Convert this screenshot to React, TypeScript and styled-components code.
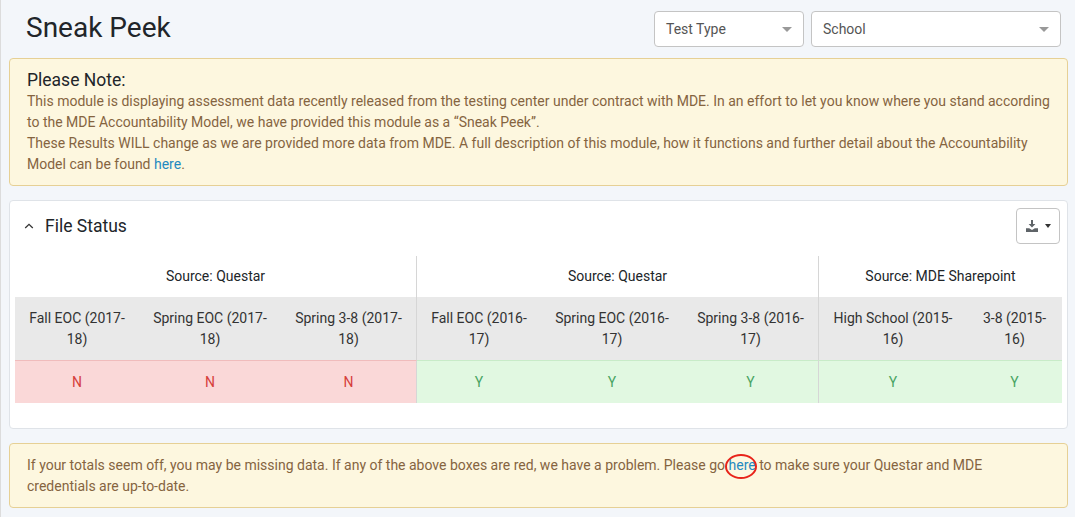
import React from "react";
import styled, { createGlobalStyle } from "styled-components";

const GlobalStyle = createGlobalStyle`
  html, body {
    margin: 0;
    padding: 0;
    background: #f3f6fa;
    font-family: Roboto, "Liberation Sans", sans-serif;
    font-size: 14px;
    line-height: 21px;
    color: #212529;
  }
`;

type Col = { label: string; year: string; value: "Y" | "N"; width: number };
type Group = { source: string; cols: Col[] };

const groups: Group[] = [
  {
    source: "Source: Questar",
    cols: [
      { label: "Fall EOC", year: "2017-18", value: "N", width: 124 },
      { label: "Spring EOC", year: "2017-18", value: "N", width: 142 },
      { label: "Spring 3-8", year: "2017-18", value: "N", width: 136 },
    ],
  },
  {
    source: "Source: Questar",
    cols: [
      { label: "Fall EOC", year: "2016-17", value: "Y", width: 124 },
      { label: "Spring EOC", year: "2016-17", value: "Y", width: 142 },
      { label: "Spring 3-8", year: "2016-17", value: "Y", width: 136 },
    ],
  },
  {
    source: "Source: MDE Sharepoint",
    cols: [
      { label: "High School", year: "2015-16", value: "Y", width: 148 },
      { label: "3-8", year: "2015-16", value: "Y", width: 95 },
    ],
  },
];

const App: React.FC = () => {
  return (
    <Page>
      <GlobalStyle />
      {/* Header */}
      <Header>
        <Title>Sneak Peek</Title>
        <Filters>
          <Select $width={150}>
            Test Type
            <Caret />
          </Select>
          <Select $width={250}>
            School
            <Caret />
          </Select>
        </Filters>
      </Header>

      {/* Top note */}
      <Note>
        <NoteTitle>Please Note:</NoteTitle>
        This module is displaying assessment data recently released from the testing center under contract with MDE. In an effort to let you know where you stand according to the MDE Accountability Model, we have provided this module as a “Sneak Peek”.
        <br />
        These Results WILL change as we are provided more data from MDE. A full description of this module, how it functions and further detail about the Accountability Model can be found <NoteLink>here</NoteLink>.
      </Note>

      {/* File status */}
      <Panel>
        <PanelHeader>
          <PanelName>
            <svg width="10" height="6" viewBox="0 0 10 6" fill="none" stroke="#333" strokeWidth="1.3">
              <path d="M1.2 5 5 1.4 8.8 5" />
            </svg>
            <PanelTitle>File Status</PanelTitle>
          </PanelName>
          <ExportButton>
            <svg width="12" height="12" viewBox="0 0 12 12" fill="#5f6468">
              <path d="M5 0h2v4h2.4L6 7.6 2.6 4H5z" />
              <path d="M0 8.2h3.2L6 10l2.8-1.8H12V12H0z" />
            </svg>
            <SmallCaret />
          </ExportButton>
        </PanelHeader>
        <StatusTable>
          <colgroup>
            {groups.flatMap((g) => g.cols).map((c, i) => (
              <col key={i} width={c.width} />
            ))}
          </colgroup>
          <thead>
            <tr>
              {groups.map((g, i) => (
                <SourceCell key={i} colSpan={g.cols.length} $divider={i < groups.length - 1}>
                  {g.source}
                </SourceCell>
              ))}
            </tr>
            <tr>
              {groups.map((g, i) =>
                g.cols.map((c, j) => (
                  <ColumnCell key={`${i}-${j}`} $divider={i < groups.length - 1 && j === g.cols.length - 1}>
                    {c.label} ({c.year})
                  </ColumnCell>
                ))
              )}
            </tr>
          </thead>
          <tbody>
            <tr>
              {groups.map((g, i) =>
                g.cols.map((c, j) => (
                  <ValueCell
                    key={`${i}-${j}`}
                    $ok={c.value === "Y"}
                    $divider={i < groups.length - 1 && j === g.cols.length - 1}
                  >
                    {c.value}
                  </ValueCell>
                ))
              )}
            </tr>
          </tbody>
        </StatusTable>
      </Panel>

      {/* Bottom note */}
      <BottomNote>
        If your totals seem off, you may be missing data. If any of the above boxes are red, we have a problem. Please go{" "}
        <CircledLink>here</CircledLink> to make sure your Questar and MDE credentials are up-to-date.
      </BottomNote>
    </Page>
  );
};

export default App;

const Page = styled.div`
  box-sizing: border-box;
  width: 1075px;
  height: 517px;
  overflow: hidden;
  padding: 0 7px 0 8px;
  border-left: 1px solid #dcdcdc;
`;

const Header = styled.header`
  display: flex;
  justify-content: space-between;
  align-items: flex-start;
  height: 58px;
  padding: 11px 7px 0 17px;
  box-sizing: border-box;
`;

const Title = styled.h1`
  margin: 0;
  font-size: 28px;
  line-height: 34px;
  font-weight: 400;
  color: #212529;
`;

const Filters = styled.div`
  display: flex;
  gap: 7px;
`;

const Select = styled.div<{ $width: number }>`
  box-sizing: border-box;
  width: ${({ $width }) => $width}px;
  height: 36px;
  display: flex;
  align-items: center;
  justify-content: space-between;
  padding: 0 11px;
  background: #fff;
  border: 1px solid #c4c4c4;
  border-radius: 4px;
  color: #555;
`;

const Caret = styled.span`
  width: 0;
  height: 0;
  border-left: 5px solid transparent;
  border-right: 5px solid transparent;
  border-top: 5px solid #999;
`;

const SmallCaret = styled.span`
  width: 0;
  height: 0;
  border-left: 3.5px solid transparent;
  border-right: 3.5px solid transparent;
  border-top: 4px solid #333;
`;

const Note = styled.div`
  box-sizing: border-box;
  height: 128px;
  padding: 10px 17px;
  background: #fdf7df;
  border: 1px solid #e6d095;
  border-radius: 4px;
  color: #85643f;
`;

const NoteTitle = styled.div`
  font-size: 17.5px;
  line-height: 22px;
  color: #212529;
`;

const NoteLink = styled.a`
  color: #1f8ac0;
`;

const Panel = styled.section`
  box-sizing: border-box;
  height: 229px;
  margin-top: 14px;
  padding: 0 5px;
  background: #fff;
  border: 1px solid #dfe3e8;
  border-radius: 4px;
`;

const PanelHeader = styled.div`
  display: flex;
  justify-content: space-between;
  align-items: flex-start;
  height: 55px;
  padding-top: 7px;
  box-sizing: border-box;
`;

const PanelName = styled.div`
  display: flex;
  align-items: center;
  gap: 11px;
  height: 36px;
  padding-left: 9px;
`;

const PanelTitle = styled.h2`
  margin: 0;
  font-size: 17.5px;
  font-weight: 400;
  color: #212529;
`;

const ExportButton = styled.button`
  box-sizing: border-box;
  width: 44px;
  height: 36px;
  margin-right: 2px;
  display: flex;
  align-items: center;
  justify-content: center;
  gap: 7px;
  padding: 0;
  background: #fff;
  border: 1px solid #c4c4c4;
  border-radius: 4px;
`;

const StatusTable = styled.table`
  width: 1047px;
  table-layout: fixed;
  border-collapse: separate;
  border-spacing: 0;
`;

const dividerColor = "#d6d6d6";

const SourceCell = styled.th<{ $divider?: boolean }>`
  box-sizing: border-box;
  height: 41px;
  padding: 10px;
  font-weight: 400;
  text-align: center;
  color: #212529;
  border-right: ${({ $divider }) => ($divider ? `1px solid ${dividerColor}` : "none")};
`;

const ColumnCell = styled.th<{ $divider?: boolean }>`
  box-sizing: border-box;
  height: 63px;
  padding: 10px;
  font-weight: 400;
  text-align: center;
  color: #333;
  background: #e9e9e9;
  border-right: ${({ $divider }) => ($divider ? `1px solid ${dividerColor}` : "none")};
`;

const ValueCell = styled.td<{ $ok: boolean; $divider?: boolean }>`
  box-sizing: border-box;
  height: 43px;
  padding: 10px;
  text-align: center;
  color: ${({ $ok }) => ($ok ? "#4aa564" : "#d6403c")};
  background: ${({ $ok }) => ($ok ? "#e1f8e1" : "#fad8d8")};
  border-top: 1px solid ${({ $ok }) => ($ok ? "#c8ebc8" : "#f0bcbc")};
  border-right: ${({ $divider }) => ($divider ? `1px solid ${dividerColor}` : "none")};
`;

const BottomNote = styled.div`
  box-sizing: border-box;
  height: 65px;
  margin-top: 14px;
  padding: 11px 17px;
  background: #fdf7df;
  border: 1px solid #e6d095;
  border-radius: 4px;
  color: #85643f;
`;

const CircledLink = styled.a`
  position: relative;
  color: #1f8ac0;
  &::after {
    content: "";
    position: absolute;
    left: -4px;
    top: -3px;
    width: 28px;
    height: 21px;
    border: 2px solid #e8231a;
    border-radius: 50%;
  }
`;
